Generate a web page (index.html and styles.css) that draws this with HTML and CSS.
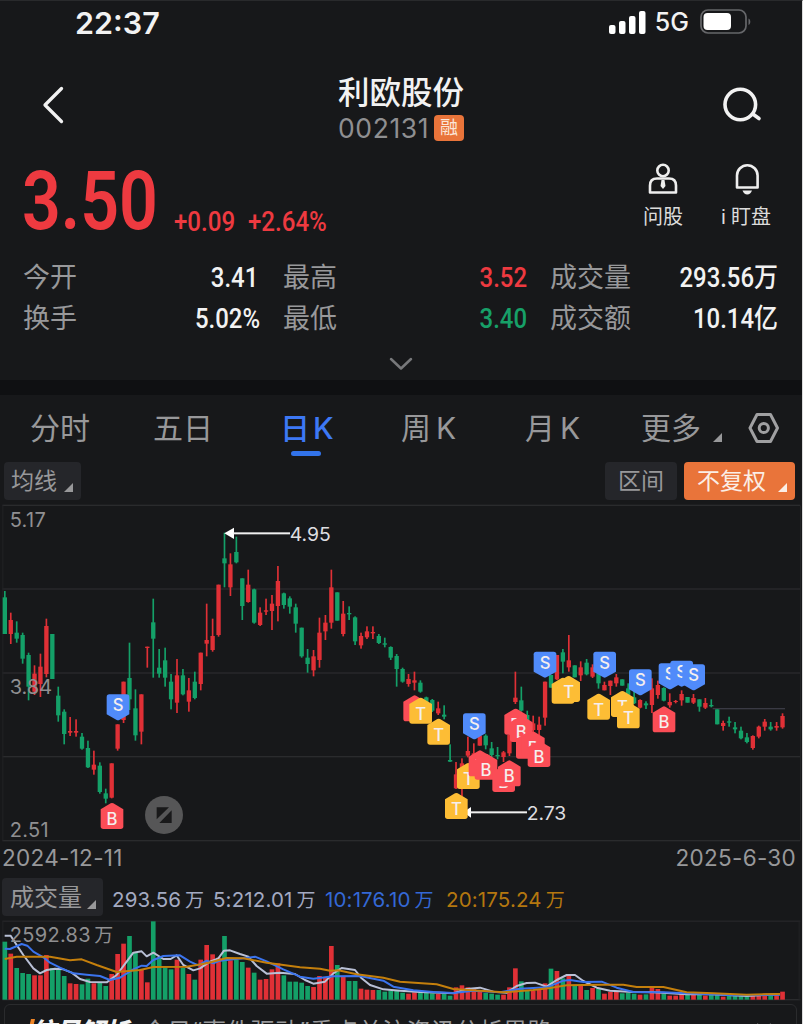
FILE: index.html
```html
<!DOCTYPE html>
<html lang="zh-CN">
<head>
    <meta charset="UTF-8">
    <meta name="viewport" content="width=device-width, initial-scale=1.0">
    <title>利欧股份 002131</title>
    <link rel="stylesheet" href="styles.css">
</head>
<body>
    <div class="phone">
        <div class="status-bar">
            <span class="time">22:37</span>
            <div class="status-right">
                <svg class="signal" width="37" height="24" viewBox="0 0 37 24" fill="#fff">
                    <rect x="0" y="15" width="6.5" height="9" rx="2"/>
                    <rect x="10" y="11" width="6.5" height="13" rx="2"/>
                    <rect x="20" y="6" width="6.5" height="18" rx="2"/>
                    <rect x="30" y="1" width="6.5" height="23" rx="2"/>
                </svg>
                <span class="network">5G</span>
                <svg width="52" height="26" viewBox="0 0 52 26">
                    <rect x="1" y="1" width="45" height="23" rx="7" fill="none" stroke="#66676a" stroke-width="1.7"/>
                    <rect x="3.5" y="4" width="27.5" height="17" rx="4" fill="#fff"/>
                    <path d="M48.5 9.5c2.4 1 2.4 5.5 0 6.5z" fill="#66676a"/>
                </svg>
            </div>
        </div>

        <div class="header">
            <svg class="back" width="24" height="40" viewBox="0 0 24 40">
                <path d="M20.5 3.5L4 20l16.5 16.5" fill="none" stroke="#f2f2f2" stroke-width="3.3" stroke-linecap="round" stroke-linejoin="round"/>
            </svg>
            <div class="title">
                <h1>利欧股份</h1>
                <div class="code-row"><span class="code">002131</span><span class="badge">融</span></div>
            </div>
            <svg class="search" width="40" height="38" viewBox="0 0 40 38" fill="none" stroke="#f2f2f2" stroke-width="3.6" stroke-linecap="round">
                <circle cx="18.3" cy="18.5" r="15.3"/>
                <path d="M31.5 28.5l5.5 4"/>
            </svg>
        </div>

        <div class="quote">
            <span class="price">3.50</span>
            <span class="change">+0.09</span>
            <span class="change">+2.64%</span>
            <div class="actions">
                <div class="action">
                    <svg width="32" height="32" viewBox="0 0 32 32" fill="none" stroke="#eee" stroke-width="2.6">
                        <circle cx="16" cy="7.5" r="5.7"/>
                        <path d="M3 29.5v-7q0-7 7-7h12q7 0 7 7v7z" stroke-linejoin="round"/>
                        <path d="M14.5 17h3l1 6-2.5 3-2.5-3z" fill="#eee" stroke="none"/>
                    </svg>
                    <span>问股</span>
                </div>
                <div class="action">
                    <svg width="32" height="32" viewBox="0 0 32 32" fill="none" stroke="#eee" stroke-width="2.6">
                        <path d="M7 24.5v-12a10.3 10.3 0 0 1 20.6 0v12z" stroke-linejoin="round"/>
                        <path d="M12.5 27.5h9.5q-1.5 4-4.75 4t-4.75-4z" fill="#eee" stroke="none"/>
                    </svg>
                    <span>i 盯盘</span>
                </div>
            </div>
        </div>

        <div class="stats">
            <span class="label">今开</span><span class="value inset">3.41</span>
            <span class="label">最高</span><span class="value up">3.52</span>
            <span class="label">成交量</span><span class="value">293.56万</span>
            <span class="label">换手</span><span class="value">5.02%</span>
            <span class="label">最低</span><span class="value down">3.40</span>
            <span class="label">成交额</span><span class="value">10.14亿</span>
        </div>
        <div class="expand">
            <svg width="24" height="14" viewBox="0 0 24 14">
                <path d="M2 2l10 9.5L22 2" fill="none" stroke="#77787a" stroke-width="2.5" stroke-linecap="round" stroke-linejoin="round"/>
            </svg>
        </div>

        <div class="tabs">
            <span>分时</span>
            <span>五日</span>
            <span class="active">日<b>K</b></span>
            <span>周<b>K</b></span>
            <span>月<b>K</b></span>
            <span class="more">更多<i class="corner"></i></span>
            <svg width="32" height="32" viewBox="0 0 32 32" fill="none" stroke="#a0a0a2" stroke-width="3">
                <path d="M9 2.5h13.5l7 13.5-7 13.5H9L2 16z" stroke-linejoin="round"/>
                <circle cx="15.8" cy="16" r="4.6"/>
            </svg>
        </div>

        <div class="toolbar">
            <span class="chip chip-ma">均线<i class="corner"></i></span>
            <span class="chip chip-range">区间</span>
            <span class="chip chip-adjust">不复权<i class="corner"></i></span>
        </div>

        <svg id="kline" class="kline" viewBox="0 0 2409 1035"></svg>

        <div class="dates"><span>2024-12-11</span><span>2025-6-30</span></div>

        <div class="volume-bar">
            <span class="chip chip-volume">成交量<i class="corner"></i></span>
            <span class="ma now">293.56<em>万</em></span>
            <span class="ma ma5">5:212.01<em>万</em></span>
            <span class="ma ma10">10:176.10<em>万</em></span>
            <span class="ma ma20">20:175.24<em>万</em></span>
        </div>

        <svg id="volume" class="volume" viewBox="0 0 2409 246"></svg>

        <div class="news">
            <svg class="slash" width="9" height="22" viewBox="0 0 9 22"><path d="M5 0h4L4 22H0z" fill="#ee8426"/></svg>
            <span class="news-tag">信号解析</span>
            <span class="news-text">今日“事件驱动”重点关注资讯分析思路</span>
            <svg class="close" width="16" height="16" viewBox="0 0 16 16"><path d="M1 1l14 14M15 1L1 15" stroke="#8a8a8c" stroke-width="2"/></svg>
        </div>
    </div>
    <script src="chart.js"></script>
</body>
</html>
```
FILE: styles.css
```css
* {
    margin: 0;
    padding: 0;
    box-sizing: border-box;
}

body {
    background: #17181a;
    font-family: Inter, "Noto Sans CJK SC", sans-serif;
    color: #f2f2f2;
}

.phone {
    width: 803px;
    height: 1024px;
    overflow: hidden;
    display: flex;
    flex-direction: column;
    border-top: 1px solid #292a2c;
    border-right: 1px solid #dcdcdc;
}

.phone > * {
    flex-shrink: 0;
}

.status-bar {
    height: 42px;
    display: flex;
    justify-content: space-between;
    align-items: center;
    padding: 0 50px 0 75px;
}

.time {
    font-size: 30.5px;
    font-weight: 600;
}

.status-right {
    display: flex;
    align-items: center;
}

.network {
    font-size: 25px;
    font-weight: 500;
    margin: 0 11px 0 9px;
}

.header {
    height: 114px;
    display: flex;
    justify-content: space-between;
    padding: 0 40px 0 41px;
}

.back {
    margin-top: 42px;
}

.search {
    margin-top: 43px;
}

.title {
    width: 126px;
    margin-left: 15px;
    padding-top: 27px;
}

h1 {
    font-family: "Noto Sans CJK SC", sans-serif;
    font-size: 31.5px;
    font-weight: 500;
    line-height: 40px;
    white-space: nowrap;
}

.code-row {
    display: flex;
    align-items: center;
    justify-content: space-between;
    height: 30px;
    margin-top: 3px;
}

.code {
    font-size: 26.5px;
    line-height: 28px;
    color: #8f8f91;
    letter-spacing: 0.6px;
}

.badge {
    width: 30px;
    height: 26px;
    border-radius: 4px;
    background: #e9743a;
    color: #fbe6d8;
    font-size: 18px;
    line-height: 26px;
    text-align: center;
}

.quote {
    height: 99px;
    display: flex;
    align-items: flex-start;
    padding-left: 22px;
    font-family: Roboto, "Noto Sans CJK SC", sans-serif;
    color: #ee3a40;
}

.price {
    width: 152px;
    font-size: 81px;
    font-weight: 600;
    line-height: 90px;
    transform: scaleX(0.84);
    transform-origin: left;
}

.change {
    width: 74px;
    margin-top: 47px;
    font-size: 28px;
    font-weight: 500;
    line-height: 36px;
    transform: scaleX(0.86);
    transform-origin: left;
}

.actions {
    display: flex;
    margin-left: auto;
    padding: 6px 27px 0 0;
    gap: 25px;
    color: #dcdcdc;
}

.action {
    width: 58px;
    display: flex;
    flex-direction: column;
    align-items: center;
    font-size: 20px;
    line-height: 26px;
    gap: 9px;
    white-space: nowrap;
}

.stats {
    display: grid;
    grid-template-columns: 110px 127px 124px 143px 124px 127px;
    grid-auto-rows: 41px;
    height: 87px;
    padding: 1px 0 0 23px;
    align-items: center;
    line-height: 41px;
}

.label {
    font-size: 27px;
    color: #98989a;
    white-space: nowrap;
}

.value + .label {
    padding-left: 23px;
}

.stats .label:nth-child(7) {
    padding-left: 0;
}

.value {
    font-family: Roboto, "Noto Sans CJK SC", sans-serif;
    font-size: 27.5px;
    font-weight: 500;
    text-align: right;
    white-space: nowrap;
    transform: scaleX(0.87);
    transform-origin: right;
}

.inset {
    padding-right: 2px;
}

.up {
    color: #ee3a40;
}

.down {
    color: #17a068;
}

.expand {
    height: 52px;
    padding-top: 14px;
    border-bottom: 15px solid #0f1012;
}

.expand svg {
    display: block;
    margin: 0 auto;
}

.tabs {
    display: grid;
    grid-template-columns: 123px 127px 121px 124px 116px 107px 40px;
    height: 67px;
    padding-left: 30px;
    font-size: 30px;
    line-height: 67px;
    color: #98989a;
}

.tabs span {
    white-space: nowrap;
}

.tabs svg {
    margin-top: 17px;
}

.tabs b {
    font-weight: 400;
    margin-left: 5px;
}

.tabs .active {
    position: relative;
    width: 54px;
    color: #3d78f5;
    font-weight: 500;
}

.active::after {
    content: "";
    position: absolute;
    left: 11px;
    top: 56px;
    width: 30px;
    height: 5px;
    border-radius: 3px;
    background: #3273ea;
}

.tabs .active b {
    font-weight: 500;
    margin-left: 3px;
}

.corner {
    display: inline-block;
    width: 9px;
    height: 9px;
    background: currentColor;
    clip-path: polygon(100% 0, 100% 100%, 0 100%);
}

.more .corner {
    margin-left: 12px;
    transform: translateY(3px);
}

.toolbar {
    display: flex;
    height: 38px;
    padding: 0 7px 0 4px;
}

.chip {
    height: 38px;
    border-radius: 4px;
    background: #25262a;
    color: #98989a;
    font-size: 23px;
    line-height: 39px;
    white-space: nowrap;
}

.chip .corner {
    margin-left: 7px;
    transform: translateY(3px);
}

.chip-ma {
    width: 77px;
    padding-left: 7px;
}

.chip-range {
    width: 72px;
    margin-left: auto;
    text-align: center;
}

.chip-adjust {
    width: 111px;
    margin-left: 7px;
    padding-left: 13px;
    background: #e9743a;
    color: #fbeee6;
}

.chip-adjust .corner {
    margin-left: 12px;
}

.kline {
    display: block;
    width: 803px;
    height: 345px;
}

.dates {
    height: 33px;
    display: flex;
    justify-content: space-between;
    padding: 0 6px 0 2px;
    font-size: 22.5px;
    line-height: 26px;
    letter-spacing: 0.3px;
    color: #98989a;
}

.volume-bar {
    height: 42px;
    display: flex;
    padding-left: 2px;
    font-size: 20.5px;
    line-height: 43px;
}

.chip-volume {
    width: 101px;
    padding-left: 8px;
    margin-right: 9px;
    font-size: 24px;
}

.chip-volume .corner {
    margin-left: 5px;
}

.ma {
    white-space: nowrap;
    letter-spacing: 0.15px;
}

.ma em {
    font-style: normal;
    margin-left: 4px;
    font-size: 19px;
}

.now {
    width: 101px;
    color: #a3aac2;
}

.ma5 {
    width: 112px;
    color: #a3aac2;
}

.ma10 {
    width: 121px;
    color: #3468d6;
}

.ma20 {
    color: #b4770f;
}

.volume {
    display: block;
    width: 803px;
    height: 82px;
}

.news {
    display: flex;
    height: 60px;
    margin: 2px 5px 0 4px;
    padding: 9px 20px 0 21px;
    border: 1px solid #2a2b2d;
    border-radius: 6px;
    line-height: 36px;
}

.slash {
    margin: 5px -5px 0 0;
}

.news-tag {
    width: 113px;
    font-size: 25.5px;
    font-weight: 900;
    font-style: italic;
    letter-spacing: -1px;
    white-space: nowrap;
}

.news-text {
    font-size: 24px;
    letter-spacing: 0.2px;
    color: #98989a;
}

.close {
    margin: 9px 4px 0 auto;
}

.axis {
    font-size: 60px;
    fill: #8f8f91;
}

.axis-wide {
    letter-spacing: 1px;
}

.note {
    font-size: 58px;
    fill: #dedee0;
}

.mark {
    font-size: 50px;
    font-weight: 500;
    fill: #f5eeee;
    text-anchor: middle;
}
```
FILE: chart.js
```js
const RED = '#e03036';
const GREEN = '#14a068';
const GRID = '#2a2b2d';

// high, body top, body bottom, low, 1 = up day, top of volume bar
const days = [
    [273,292,402,402,0,65],[338,360,402,432,1,101],[364,398,416,428,0,144],[398,405,476,491,0,159],
    [458,465,560,601,0,162],[496,521,575,585,1,166],[461,500,552,591,1,166],[356,378,522,532,1,105],
    [402,402,537,537,0,144],[560,587,646,665,0,144],[628,635,702,733,0,168],[651,693,698,708,1,190],
    [658,693,698,710,1,192],[699,710,746,749,0,193],[722,744,802,804,0,176],[752,794,809,824,1,190],
    [787,797,876,881,0,188],[866,880,896,910,0,198],[790,790,893,895,1,162],[673,673,746,752,1,102],
    [545,545,660,669,1,71],[428,534,598,630,0,48],[568,625,706,722,0,98],[583,583,695,733,1,148],
    [440,440,444,503,1,187],[296,367,416,533,0,4],[447,503,521,533,0,113],[443,481,533,560,0,142],
    [522,545,598,628,0,148],[477,526,608,639,1,119],[507,526,583,586,0,144],[534,571,605,635,1,162],
    [515,545,594,598,0,179],[458,458,552,571,1,119],[311,420,431,469,1,75],[356,408,450,455,1,103],
    [254,254,405,410,1,113],[98,175,190,262,0,48],[160,193,262,288,1,121],[110,156,187,190,0,119],
    [235,235,318,360,0,126],[209,254,306,308,1,143],[266,268,368,371,0,158],[322,338,375,378,1,179],
    [296,331,335,345,1,177],[285,311,333,390,1,148],[198,243,318,364,1,130],[278,280,315,326,0,166],
    [289,295,320,341,0,185],[311,322,371,398,0,185],[383,383,469,473,0,188],[447,473,492,518,0,198],
    [450,469,511,529,1,201],[353,398,480,503,1,168],[345,368,394,420,1,171],[209,262,368,386,1,78],
    [277,277,362,362,0,135],[303,341,402,409,1,169],[319,339,343,360,0,183],[349,352,424,435,0,183],
    [398,408,436,446,1,206],[379,394,412,417,1,209],[379,396,400,417,1,210],[402,408,429,432,0,210],
    [413,430,434,442,0,215],[439,441,473,480,0,212],[462,468,507,560,0,212],[503,507,545,548,0,218],
    [522,537,552,560,1,221],[515,541,548,571,1,217],[541,548,575,578,0,218],[590,592,620,622,0,218],
    [597,600,632,636,0,220],[605,625,640,645,1,222],[616,644,650,658,0,221],[733,780,785,786,0,227],
    [786,823,865,867,1,202],[775,790,860,890,1,196],[710,753,767,772,1,202],[730,760,770,770,1,205],
    [705,707,737,737,1,213],[703,707,736,748,0,219],[726,745,765,772,0,221],[741,765,769,778,0,224],
    [753,757,771,786,1,224],[700,705,760,768,1,202],[515,593,606,612,1,145],[560,601,632,635,0,184],
    [632,645,680,680,0,210],[647,670,690,700,1,212],[650,674,690,705,1,210],[545,545,653,677,1,190],
    [525,525,563,563,0,146],[465,465,538,540,1,153],[447,457,485,520,0,175],[405,481,502,515,1,168],
    [496,496,532,532,0,197],[484,502,526,543,1,197],[477,488,523,526,0,210],[493,502,530,534,1,204],
    [510,520,550,566,0,207],[545,555,571,571,1,221],[542,542,558,585,1,216],[522,532,550,560,1,216],
    [538,538,557,557,0,220],[550,565,585,590,0,218],[565,592,610,612,0,221],[598,600,623,625,1,224],
    [604,610,616,627,0,223],[535,565,615,639,1,202],[542,555,585,596,1,207],[562,564,602,604,0,221],
    [580,606,616,623,1,227],[600,603,606,610,1,227],[571,582,601,617,1,222],[591,591,608,608,0,225],
    [582,594,608,612,1,224],[598,598,620,635,0,225],[594,609,623,627,1,227],[598,615,619,622,0,220],
    [628,628,673,673,0,220],[662,669,678,692,1,230],[650,664,668,680,0,226],[666,682,688,700,0,227],
    [680,692,715,718,0,227],[699,712,726,730,0,227],[706,708,744,749,1,226],[677,680,710,715,1,227],
    [657,665,680,692,1,221],[666,680,688,692,0,226],[666,678,683,692,1,225],[640,648,682,686,1,215]
];

// type, centre x, top y
const marks = [
    ['S',354,583],['B',336,908],['B',1244,585],['T',1262,592],['T',1316,655],['S',1423,640],
    ['T',1405,788],['B',1440,750],['B',1458,760],['B',1511,797],['B',1528,780],['T',1369,878],
    ['B',1547,625],['B',1564,647],['B',1582,697],['B',1600,694],['B',1617,722],
    ['T',1689,532],['T',1706,527],['S',1635,455],['T',1796,580],['S',1814,455],
    ['T',1867,572],['T',1885,606],['S',1921,508],['S',2010,490],['S',2045,482],['S',2081,493],
    ['B',1992,618]
];

const averages = [
    ['#b9c0d6', '14,47 32,47 50,75 70,105 100,145 120,160 140,150 165,146 190,148 215,158 240,177 270,186 320,187 350,165 380,125 400,98 425,94 440,109 460,98 490,117 512,117 530,106 550,135 580,151 600,145 630,125 655,115 672,92 690,91 720,102 745,110 770,138 800,161 840,158 885,162 915,180 940,191 975,185 1000,160 1025,144 1065,150 1085,175 1110,195 1150,208 1200,212 1260,216 1360,220 1400,207 1440,203 1480,215 1520,218 1550,198 1580,189 1605,188 1640,200 1670,180 1700,165 1725,165 1750,183 1790,203 1830,212 1900,216 1960,217 2060,223 2120,222 2240,228 2340,222'],
    ['#3b74ee', '14,86 30,87 65,72 82,77 100,95 130,112 150,128 180,143 220,160 260,164 300,168 330,180 360,173 400,148 425,137 440,138 460,120 490,108 540,106 570,125 595,136 620,122 640,130 660,122 700,118 740,114 765,110 800,124 850,148 900,170 940,176 1000,169 1080,168 1150,182 1180,200 1240,211 1300,216 1360,219 1420,212 1500,217 1560,206 1640,202 1690,182 1710,180 1750,186 1805,185 1850,203 1900,216 1990,217 2060,220 2200,226 2340,224'],
    ['#c47f0c', '14,117 50,110 150,110 210,121 245,118 290,135 350,156 420,150 460,141 560,140 620,130 680,114 730,115 800,128 900,142 960,146 990,152 1015,151 1070,163 1150,173 1200,185 1310,193 1360,207 1440,212 1510,217 1600,210 1650,204 1700,196 1800,194 1870,194 1910,201 1990,201 2060,217 2140,220 2240,224 2340,222']
];

const dayX = i => 14.5 + i * 17.81;
const rect = (x, y, w, h, fill) => `<rect x="${x}" y="${y}" width="${w}" height="${h}" fill="${fill}"/>`;

function drawMark([type, x, y]) {
    const color = { S: '#508bfa', B: '#fb4d56', T: '#fdbd35' }[type];
    const shape = type === 'S'
        ? 'M-26 0H26Q34 0 34 8V60L4 77Q0 79 -4 77L-34 60V8Q-34 0 -26 0Z'
        : 'M-4 2Q0 0 4 2L34 20V71Q34 79 26 79H-26Q-34 79 -34 71V20Z';
    return `<g transform="translate(${x} ${y})"><path d="${shape}" fill="${color}"/>` +
        `<text class="mark" y="${type === 'S' ? 51 : 67}">${type}</text></g>`;
}

function drawKline() {
    let out = '';
    [16, 267, 519, 770, 1022].forEach(y => out += rect(7, y - 2, 2394, 4, GRID));
    out += rect(7, 16, 3, 1006, '#222325') + rect(2400, 16, 3, 1006, '#222325');
    out += rect(2138, 624, 217, 4, '#3a3a44');
    days.forEach(([high, top, bottom, low, up], i) => {
        const color = up ? RED : GREEN;
        out += rect(dayX(i) - 2.5, high, 5, low - high, color);
        out += rect(dayX(i) - 6.5, top, 13, bottom - top, color);
    });
    out += '<text class="axis axis-wide" x="29" y="80">5.17</text>' +
        '<text class="axis" x="29" y="582">3.84</text>' +
        '<text class="axis axis-wide" x="29" y="1010">2.51</text>';
    out += '<path d="M673 100L702 83V117Z" fill="#fff"/>' + rect(700, 97, 170, 6, '#f0f0f0') +
        '<text class="note" x="869" y="122">4.95</text>';
    out += '<path d="M1390 937L1413 921V953Z" fill="#fff"/>' + rect(1410, 934, 171, 6, '#f0f0f0') +
        '<text class="note" x="1580" y="960">2.73</text>';
    out += marks.map(drawMark).join('');
    // full screen button
    out += '<circle cx="492" cy="945" r="57" fill="#565657"/>' +
        '<path d="M470 922H507L470 958ZM515 931V969H478Z" fill="#19191a"/>';
    document.getElementById('kline').innerHTML = out;
}

function drawVolume() {
    let out = rect(7, 2, 2394, 3, GRID) + rect(7, 237, 2394, 4, GRID) +
        rect(7, 4, 3, 236, '#222325') + rect(2396, 4, 3, 236, '#222325');
    days.forEach((d, i) => {
        out += rect(dayX(i) - 7, d[5], 14, 239 - d[5], d[4] ? RED : GREEN);
    });
    averages.forEach(([color, points]) => {
        out += `<polyline points="${points}" fill="none" stroke="${color}" stroke-width="6" stroke-linejoin="round"/>`;
    });
    out += '<text class="axis axis-wide" x="29" y="66">2592.83<tspan dx="10" font-size="57">万</tspan></text>';
    document.getElementById('volume').innerHTML = out;
}

drawKline();
drawVolume();
```
